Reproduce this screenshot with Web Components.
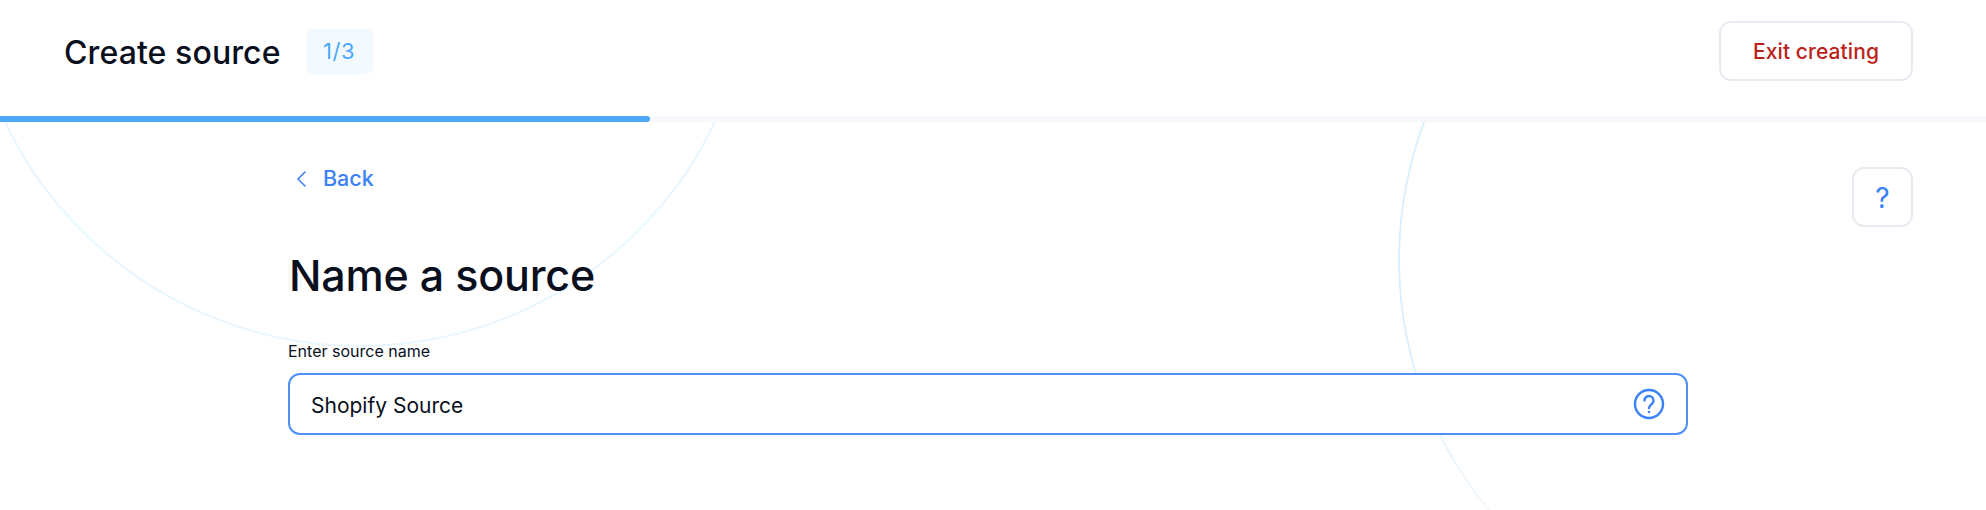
<!doctype html>
<html>
<head>
<meta charset="utf-8">
<title>Create source</title>
<style>
  html, body { margin: 0; height: 100%; background: #fff; overflow: hidden; }
  body { font-family: Inter, "Noto Sans", sans-serif; color: #0a0f1e; }
</style>
</head>
<body>
<source-page></source-page>
<script>
class SourceHeader extends HTMLElement {
  constructor() {
    super();
    this.attachShadow({ mode: "open" });
    this.shadowRoot.innerHTML = `
      <style>
        :host { display: flex; align-items: center; height: 116px; box-sizing: border-box; padding: 0 73px 14px 64px; }
        h1 { margin: 0; padding-top: 3px; font: 500 32px/1 Inter, sans-serif; letter-spacing: 0.1px; color: #0a0f1e; }
        .right { margin-left: auto; }
        .badge { margin-left: 25px; width: 67px; height: 45px; display: flex; align-items: center; justify-content: center;
          background: #f3faff; border-radius: 6px; color: #4ba8f8; font: 400 22px/1 Inter, sans-serif; letter-spacing: 0.6px; }
      </style>
      <h1><slot name="title"></slot></h1>
      <div class="badge"><slot name="step"></slot></div>
      <div class="right"><slot name="action"></slot></div>`;
  }
}

class OutlineButton extends HTMLElement {
  constructor() {
    super();
    this.attachShadow({ mode: "open" });
    this.shadowRoot.innerHTML = `
      <style>
        :host { display: flex; align-items: center; justify-content: center; box-sizing: border-box; height: 60px; min-width: 60px;
          background: #fff; border: 2px solid #e9ebf2; border-radius: 12px; font: 500 21px/1 Inter, sans-serif; }
        :host([danger]) { width: 194px; color: #bb2218; letter-spacing: 0.1px; padding-top: 1px; }
        :host([info]) { width: 61px; color: #3b82f6; font-weight: 400; font-size: 28px; padding-top: 2px; }
      </style>
      <slot></slot>`;
  }
}

class StepProgress extends HTMLElement {
  constructor() {
    super();
    this.attachShadow({ mode: "open" });
    this.shadowRoot.innerHTML = `
      <style>
        :host { display: block; height: 6px; background: #f7f8fb; position: relative; z-index: 1; }
        div { height: 100%; border-radius: 0 3px 3px 0; background: #4da8f9; }
      </style>
      <div></div>`;
    this.shadowRoot.querySelector("div").style.width = (this.getAttribute("value") || 0) + "px";
  }
}

class BackLink extends HTMLElement {
  constructor() {
    super();
    this.attachShadow({ mode: "open" });
    this.shadowRoot.innerHTML = `
      <style>
        :host { display: flex; align-items: center; height: 32px; padding-left: 8px; color: #3b82f6; font: 500 21.5px/1 Inter, sans-serif; }
        svg { width: 12px; height: 16px; margin-right: 15px; flex: none; }
      </style>
      <svg viewBox="0 0 12 16" fill="none" stroke="currentColor" stroke-width="1.6" stroke-linecap="round" stroke-linejoin="round"><path d="M9 1 2 8l7 7"/></svg>
      <slot></slot>`;
  }
}

class TextField extends HTMLElement {
  constructor() {
    super();
    this.attachShadow({ mode: "open" });
    this.shadowRoot.innerHTML = `
      <style>
        :host { display: block; }
        label { display: block; font: 400 16px/20px Inter, sans-serif; color: #0a0f1e; margin-bottom: 12px; }
        .box { display: flex; align-items: center; height: 62px; box-sizing: border-box; padding: 0 21px 0 21px; background: #fff;
          border: 2px solid #4f90f7; border-radius: 12px; font: 400 21px/1 Inter, sans-serif; color: #0a0f1e; }
        .value { padding-top: 2px; }
        svg { width: 32px; height: 32px; margin-left: auto; color: #3b82f6; }
      </style>
      <label><slot name="label"></slot></label>
      <div class="box">
        <div class="value"><slot name="value"></slot></div>
        <svg viewBox="0 0 32 32" fill="none" stroke="currentColor" stroke-width="2.4" stroke-linecap="round">
          <circle cx="16" cy="16" r="14"/>
          <path d="M11.5 12.5a4.5 4.5 0 1 1 7 3.7c-1.6 1.1-2.5 2-2.5 3.8"/>
          <circle cx="16" cy="24" r="1.3" fill="currentColor" stroke="none"/>
        </svg>
      </div>`;
  }
}

class SourcePage extends HTMLElement {
  constructor() {
    super();
    this.attachShadow({ mode: "open" });
    this.shadowRoot.innerHTML = `
      <style>
        :host { display: block; height: 510px; overflow: hidden; }
        main { position: relative; height: 388px; overflow: hidden; display: flex; align-items: flex-start; box-sizing: border-box; padding: 41px 73px 0 288px; }
        /* background rings, nothing else hangs on their place */
        .ring { position: absolute; width: 788px; height: 788px; border-radius: 50%; box-sizing: border-box; }
        .ring.a { left: -34px; top: -563px; border: 2px solid #e8f6ff; }
        .ring.b { left: 1398px; top: -256px; border: 2px solid #d8efff;
          -webkit-mask-image: linear-gradient(#000 60%, rgba(0,0,0,.35) 82%); mask-image: linear-gradient(#000 60%, rgba(0,0,0,.35) 82%); }
        .form { position: relative; width: 1400px; flex: none; }
        h2 { margin: 52px 0 38px; padding-left: 1px; font: 500 43px/56px Inter, sans-serif; letter-spacing: -0.2px; color: #0a0f1e; }
        .side { position: relative; margin: 4px 0 0 auto; }
      </style>
      <source-header>
        <span slot="title">Create source</span>
        <span slot="step">1/3</span>
        <outline-button slot="action" danger>Exit creating</outline-button>
      </source-header>
      <step-progress value="650"></step-progress>
      <main>
        <div class="ring a"></div>
        <div class="ring b"></div>
        <div class="form">
          <back-link>Back</back-link>
          <h2>Name a source</h2>
          <text-field>
            <span slot="label">Enter source name</span>
            <span slot="value">Shopify Source</span>
          </text-field>
        </div>
        <div class="side"><outline-button info>?</outline-button></div>
      </main>`;
  }
}

customElements.define("source-header", SourceHeader);
customElements.define("outline-button", OutlineButton);
customElements.define("step-progress", StepProgress);
customElements.define("back-link", BackLink);
customElements.define("text-field", TextField);
customElements.define("source-page", SourcePage);
</script>
</body>
</html>
